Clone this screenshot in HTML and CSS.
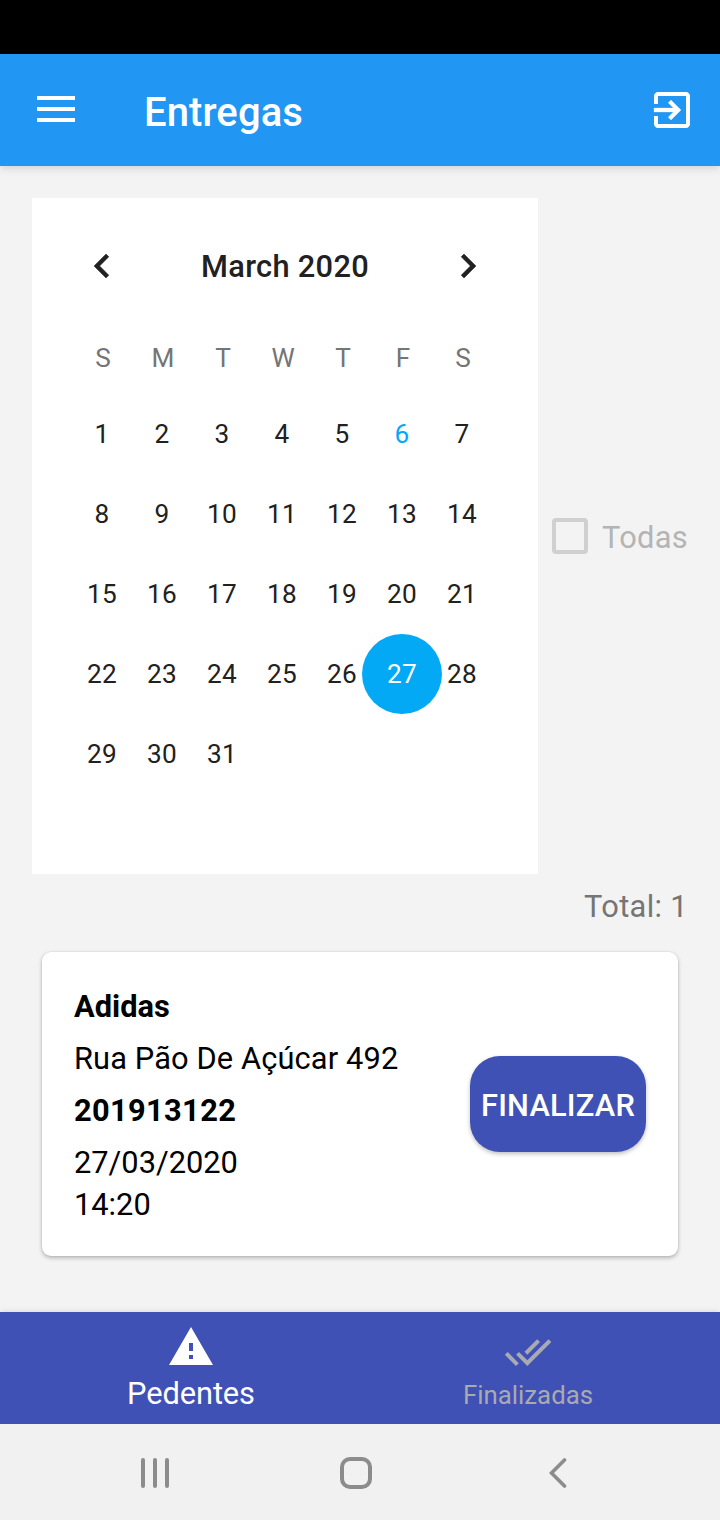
FILE: index.html
```html
<!DOCTYPE html>
<html lang="pt-BR">
<head>
<meta charset="utf-8">
<title>Entregas</title>
<link rel="stylesheet" href="styles.css">
</head>
<body>
<div class="status-bar"></div>
<header class="app-bar">
  <svg class="menu-icon" width="38" height="26" viewBox="0 0 38 26"><path fill="#fff" d="M0 0h38v4H0zM0 11h38v4H0zM0 22h38v4H0z"/></svg>
  <h1 class="app-title">Entregas</h1>
  <svg class="exit-icon" width="48" height="48" viewBox="0 0 24 24"><path fill="#fff" stroke="#fff" stroke-width=".15" d="M10.09 15.59L11.5 17l5-5-5-5-1.41 1.41L12.67 11H3v2h9.67l-2.58 2.59z"/><path fill="#fff" d="M19 3H5c-1.11 0-2 .9-2 2v4h2V5h14v14H5v-4H3v4c0 1.1.89 2 2 2h14c1.1 0 2-.9 2-2V5c0-1.1-.9-2-2-2z"/></svg>
</header>
<main class="content">
  <div class="filters">
    <section class="calendar">
      <div class="month-row">
        <svg class="chevron" width="48" height="48" viewBox="0 0 24 24"><path d="M15.41 7.41L14 6l-6 6 6 6 1.41-1.41L10.83 12z"/></svg>
        <span class="month">March 2020</span>
        <svg class="chevron" width="48" height="48" viewBox="0 0 24 24"><path d="M10 6L8.59 7.41 13.17 12l-4.58 4.59L10 18l6-6z"/></svg>
      </div>
      <div class="weekdays"><span>S</span><span>M</span><span>T</span><span>W</span><span>T</span><span>F</span><span>S</span></div>
      <div class="days">
        <span>1</span><span>2</span><span>3</span><span>4</span><span>5</span><span class="today">6</span><span>7</span>
        <span>8</span><span>9</span><span>10</span><span>11</span><span>12</span><span>13</span><span>14</span>
        <span>15</span><span>16</span><span>17</span><span>18</span><span>19</span><span>20</span><span>21</span>
        <span>22</span><span>23</span><span>24</span><span>25</span><span>26</span><span class="selected">27</span><span>28</span>
        <span>29</span><span>30</span><span>31</span>
      </div>
    </section>
    <div class="all-toggle"><span class="checkbox"></span><span class="toggle-label">Todas</span></div>
  </div>
  <p class="total">Total: 1</p>
  <article class="delivery">
    <div class="details">
      <strong>Adidas</strong>
      <span class="address">Rua Pão De Açúcar 492</span>
      <strong class="code">201913122</strong>
      <span class="when">27/03/2020<br>14:20</span>
    </div>
    <button class="finish">FINALIZAR</button>
  </article>
</main>
<nav class="tabs">
  <div class="tab active">
    <svg width="48" height="48" viewBox="0 0 24 24"><path fill="#fff" d="M1 21h22L12 2 1 21zm12-3h-2v-2h2v2zm0-4h-2v-4h2v4z"/></svg>
    <span>Pedentes</span>
  </div>
  <div class="tab inactive">
    <svg width="48" height="48" viewBox="0 0 24 24"><path fill="#a9a9b1" d="M18 7l-1.41-1.41-6.34 6.34 1.41 1.41L18 7zm4.24-1.41L11.66 16.17 7.48 12l-1.41 1.41L11.66 19l12-12-1.42-1.41zM.41 13.41L6 19l1.41-1.41L1.83 12 .41 13.41z"/></svg>
    <span>Finalizadas</span>
  </div>
</nav>
<footer class="system-nav">
  <svg class="recents" width="28" height="30" viewBox="0 0 28 30"><g stroke="#8c8c8c" stroke-width="4" stroke-linecap="round"><path d="M2 2v26M14 2v26M26 2v26"/></g></svg>
  <svg class="home" width="32" height="32" viewBox="0 0 32 32"><rect x="2" y="2" width="28" height="28" rx="8" fill="none" stroke="#8c8c8c" stroke-width="4"/></svg>
  <svg class="back" width="18" height="30" viewBox="0 0 18 30"><path d="M15.5 2L2.5 15l13 13" fill="none" stroke="#8c8c8c" stroke-width="3.6" stroke-linecap="round"/></svg>
</footer>
</body>
</html>
```
FILE: styles.css
```css
* { box-sizing: border-box; }
body {
  margin: 0;
  width: 720px;
  height: 1520px;
  display: flex;
  flex-direction: column;
  background: #f3f3f3;
  font-family: Roboto, "Liberation Sans", sans-serif;
  font-size: 30.8px;
  color: #000;
  overflow: hidden;
}
svg { display: block; flex: none; }
.status-bar { height: 54px; background: #000; }
.app-bar {
  height: 112px;
  display: flex;
  align-items: center;
  padding: 0 24px 0 37px;
  background: #2196f3;
  box-shadow: 0 2px 8px rgba(0, 0, 0, .15);
}
.menu-icon { margin-bottom: 2px; }
.app-title {
  margin: 6px 0 0 69px;
  font-size: 40px;
  font-weight: 500;
  line-height: 48px;
  letter-spacing: .1px;
  color: #fff;
}
.exit-icon { margin-left: auto; }
.content { height: 1146px; padding: 32px 32px 0; }
.filters { display: flex; align-items: center; justify-content: space-between; }
.calendar { width: 506px; height: 676px; background: #fff; padding: 44px 40px 0; }
.month-row {
  display: flex;
  align-items: center;
  justify-content: space-between;
  width: 414px;
  height: 48px;
  margin-left: 6px;
  color: #212121;
}
.chevron { fill: #212121; stroke: #212121; stroke-width: .25px; }
.month { font-weight: 500; letter-spacing: .3px; }
.weekdays, .days { display: grid; grid-template-columns: repeat(7, 60px); text-align: center; font-size: 26.2px; }
.weekdays { margin-top: 48px; padding-left: 1px; line-height: 40px; color: #757575; }
.days { margin-top: 16px; grid-auto-rows: 80px; line-height: 80px; color: #212121; letter-spacing: .4px; }
.today { color: #03a9f4; }
.selected { width: 80px; margin-left: -10px; border-radius: 50%; background: #03a9f4; color: #fff; }
.all-toggle { display: flex; align-items: center; gap: 14px; }
.checkbox { width: 36px; height: 36px; margin-bottom: 1px; border: 4px solid #d0d0d0; border-radius: 4px; }
.toggle-label { line-height: 36px; color: #b4b4b4; letter-spacing: .3px; margin-top: 3px; }
.total { margin: 15px 0 0; line-height: 36px; text-align: right; color: #757575; letter-spacing: .35px; }
.delivery {
  display: flex;
  align-items: center;
  justify-content: space-between;
  width: 636px;
  height: 304px;
  margin: 27px 0 0 10px;
  padding: 0 32px;
  background: #fff;
  border-radius: 9px;
  box-shadow: 0 2px 4px rgba(0, 0, 0, .25), 0 0 2px rgba(0, 0, 0, .12);
}
.details { display: flex; flex-direction: column; gap: 10px; padding-top: 4px; line-height: 42px; }
.details strong { font-weight: 700; }
.address { letter-spacing: .12px; }
.details .code { letter-spacing: .35px; }
.finish {
  width: 176px;
  height: 96px;
  padding: 4px 0 0;
  border: 0;
  border-radius: 30px;
  background: #3f51b5;
  color: #fff;
  font: 500 30.8px/36px Roboto, sans-serif;
  letter-spacing: .2px;
  box-shadow: 0 2px 4px rgba(0, 0, 0, .25);
}
.tabs {
  display: flex;
  justify-content: space-between;
  width: 720px;
  height: 112px;
  padding: 0 105px 0 104px;
  background: #3f51b5;
  box-shadow: 0 0 6px rgba(0, 0, 0, .12);
}
.tab { display: flex; flex-direction: column; align-items: center; width: 174px; }
.active { padding-top: 11px; color: #fff; }
.active span { line-height: 36px; margin-top: 5px; letter-spacing: -.1px; }
.inactive { padding-top: 16px; color: #a9a9b1; font-size: 25.8px; }
.inactive span { line-height: 32px; margin-top: 3px; }
.system-nav { display: flex; align-items: center; height: 96px; padding: 2px 0 0 141px; background: #f1f1f1; }
.home { margin-left: 171px; }
.back { margin-left: 177px; }
```
